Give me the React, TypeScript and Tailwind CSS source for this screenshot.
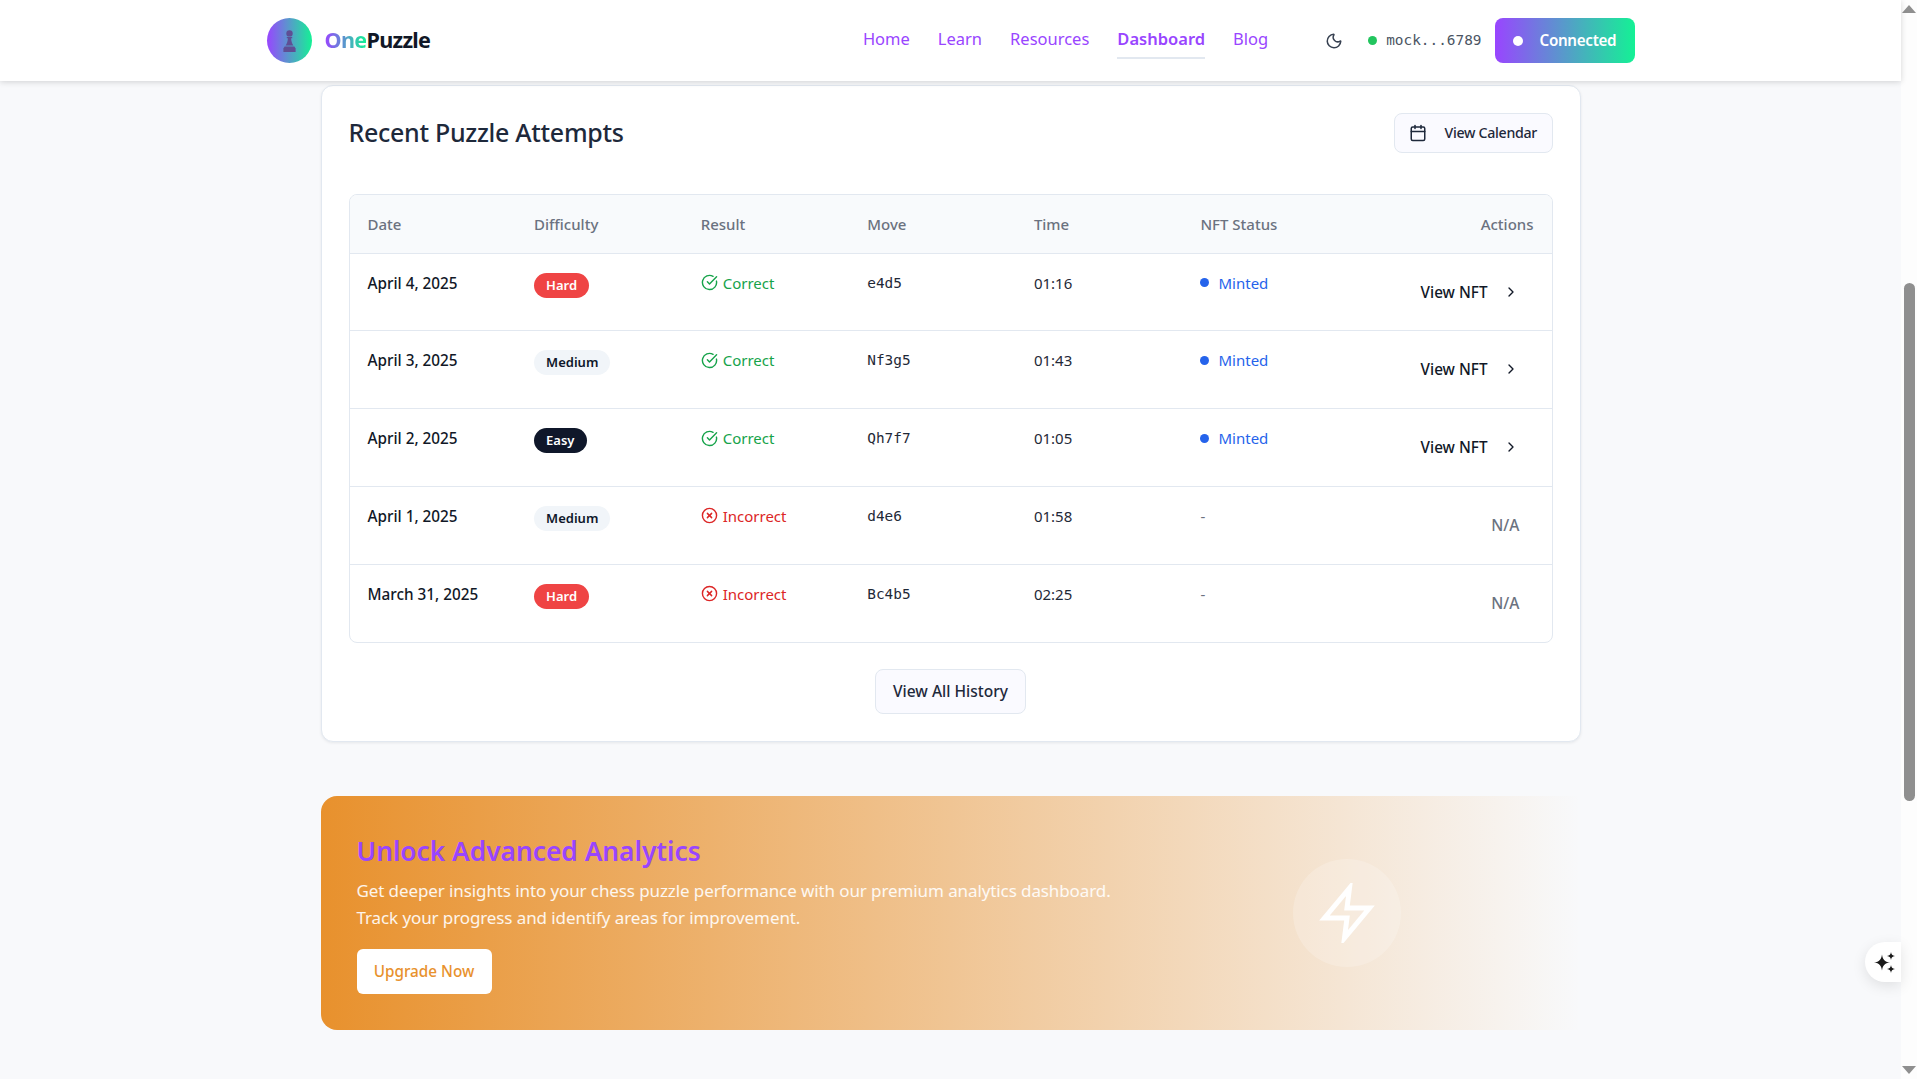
import { Calendar, ChevronRight, CircleCheckBig, CircleX, Moon } from "lucide-react";

type Attempt = {
  date: string;
  difficulty: "Hard" | "Medium" | "Easy";
  correct: boolean;
  move: string;
  time: string;
  minted: boolean;
};

const attempts: Attempt[] = [
  { date: "April 4, 2025", difficulty: "Hard", correct: true, move: "e4d5", time: "01:16", minted: true },
  { date: "April 3, 2025", difficulty: "Medium", correct: true, move: "Nf3g5", time: "01:43", minted: true },
  { date: "April 2, 2025", difficulty: "Easy", correct: true, move: "Qh7f7", time: "01:05", minted: true },
  { date: "April 1, 2025", difficulty: "Medium", correct: false, move: "d4e6", time: "01:58", minted: false },
  { date: "March 31, 2025", difficulty: "Hard", correct: false, move: "Bc4b5", time: "02:25", minted: false },
];

const badgeClass = {
  Hard: "bg-[#ef4444] text-white",
  Medium: "bg-[#f1f5f9] text-[#0f172a]",
  Easy: "bg-[#0f172a] text-white",
};

const navItems = ["Home", "Learn", "Resources", "Dashboard", "Blog"];
const headers = ["Date", "Difficulty", "Result", "Move", "Time", "NFT Status"];

const Pawn = () => (
  <svg width="13" height="22" viewBox="0 0 13 22" fill="#5f4e94">
    <circle cx="6.5" cy="3.4" r="3.2" />
    <path d="M3.8 7h5.4v1.2H8.1c.1 3 .9 5.2 2.3 7.4H2.6c1.4-2.2 2.2-4.4 2.3-7.4H3.8z" />
    <path d="M1.6 16.6h9.8l1.2 2V22H.4v-3.400z" />
  </svg>
);

const Sparkles = () => (
  <svg width="21" height="21" viewBox="0 0 21 21" fill="#1a1a1a">
    <path d="M8 2.500c.7 4.800 2.500 7.300 8 8-5.500.7-7.300 3.200-8 8-.7-4.800-2.500-7.300-8-8 5.500-.7 7.300-3.200 8-8z" />
    <path d="M17 0c.3 2.300 1.200 3.500 4 4-2.800.5-3.700 1.700-4 4-.3-2.300-1.200-3.500-4-4 2.800-.5 3.700-1.700 4-4z" />
    <path d="M17 13c.3 2.300 1.200 3.500 4 4-2.800.5-3.700 1.700-4 4-.3-2.300-1.200-3.500-4-4 2.800-.5 3.700-1.700 4-4z" />
  </svg>
);

const Header = () => (
  <header className="relative z-10 h-[81px] flex-none bg-white shadow-[0_1px_6px_rgba(0,0,0,0.16)]">
    <div className="mx-auto flex h-full w-[1368px] items-center justify-between">
      <div className="flex items-center gap-[13px]">
        <div className="flex h-[45px] w-[45px] items-center justify-center rounded-full bg-[linear-gradient(90deg,#9945ff,#14f195)]">
          <Pawn />
        </div>
        <div className="text-[21.6px] font-bold tracking-[-0.7px] text-[#111827]">
          <span className="bg-[linear-gradient(90deg,#9945ff,#14f195)] bg-clip-text text-transparent">One</span>
          Puzzle
        </div>
      </div>

      <div className="flex items-center">
        <nav className="mr-[57px] flex items-center gap-[28px] pb-[2px]">
          {navItems.map((item) => (
            <a
              key={item}
              className={
                item === "Dashboard"
                  ? "relative text-[16.5px] font-semibold text-[#9945ff]"
                  : "text-[16.5px] font-normal text-[#9945ff]"
              }
            >
              {item}
              {item === "Dashboard" && (
                <span className="absolute -bottom-[7px] left-0 h-[2px] w-full bg-[#e2e8f0]" />
              )}
            </a>
          ))}
        </nav>
        <Moon size={18} strokeWidth={2} className="mr-[25px] text-[#374151]" />
        <div className="mr-[13px] flex items-center gap-[9px]">
          <span className="h-[9px] w-[9px] rounded-full bg-[#22c55e]" />
          <span className="font-['DejaVu_Sans_Mono',monospace] text-[14.4px] text-[#4b5563]">mock...6789</span>
        </div>
        <button className="flex h-[45px] w-[140px] items-center gap-[17px] rounded-lg bg-[linear-gradient(90deg,#9945ff,#14f195)] pl-[18px] text-[15.2px] font-semibold tracking-[-0.3px] text-white">
          <span className="h-[10px] w-[10px] rounded-full bg-white" />
          Connected
        </button>
      </div>
    </div>
  </header>
);

const AttemptRow = ({ a, last }: { a: Attempt; last: boolean }) => (
  <tr className={last ? "h-[77.8px] align-top" : "h-[77.8px] border-b border-[#e2e8f0] align-top"}>
    <td className="px-[18px] pt-[17px] text-[15.3px] leading-6 font-medium text-[#111827]">{a.date}</td>
    <td className="px-[18px] pt-[18px]">
      <span className={`inline-block rounded-full px-3 text-[13px] leading-[25px] font-semibold ${badgeClass[a.difficulty]}`}>
        {a.difficulty}
      </span>
    </td>
    <td className="px-[18px] pt-[17px]">
      <div className={a.correct ? "flex items-center gap-[5px] text-[#16a34a]" : "flex items-center gap-[5px] text-[#dc2626]"}>
        {a.correct ? <CircleCheckBig size={17} /> : <CircleX size={17} />}
        <span className="text-[15px] leading-6">{a.correct ? "Correct" : "Incorrect"}</span>
      </div>
    </td>
    <td className="px-[18px] pt-[17px] font-['DejaVu_Sans_Mono',monospace] text-[14.4px] leading-6 text-[#1f2937]">{a.move}</td>
    <td className="px-[18px] pt-[17px] text-[15px] leading-6 text-[#1f2937]">{a.time}</td>
    <td className="px-[18px] pt-[17px]">
      {a.minted ? (
        <div className="flex items-center gap-[9px] text-[#2563eb]">
          <span className="h-[9px] w-[9px] rounded-full bg-[#2563eb]" />
          <span className="text-[15px] leading-6">Minted</span>
        </div>
      ) : (
        <span className="text-[15px] leading-6 text-[#6b7280]">-</span>
      )}
    </td>
    <td className="px-[18px] pt-[26px]">
      {a.minted ? (
        <div className="flex items-center justify-end gap-[15px] pr-[15px] text-[#111827]">
          <span className="text-[15.3px] leading-6 font-medium">View NFT</span>
          <ChevronRight size={16} />
        </div>
      ) : (
        <div className="pr-[14px] text-right text-[15.5px] leading-6 font-medium text-[#6b7280]">N/A</div>
      )}
    </td>
  </tr>
);

const AttemptsCard = () => (
  <section className="mt-1 rounded-xl border border-[#e2e8f0] bg-white px-[27px] pt-[27px] pb-[27px] shadow-[0_1px_3px_rgba(15,23,42,0.08)]">
    <div className="flex h-[40px] items-center justify-between">
      <h2 className="text-[25px] font-medium tracking-[-0.3px] text-[#1e293b]">Recent Puzzle Attempts</h2>
      <button className="flex h-[40px] w-[159px] items-center gap-[18px] rounded-lg border border-[#e2e8f0] bg-[#fafaff] pl-[14px] text-[14.2px] font-medium tracking-[-0.3px] text-[#1e293b]">
        <Calendar size={18} />
        View Calendar
      </button>
    </div>

    <div className="mt-[41px] overflow-hidden rounded-lg border border-[#e2e8f0]">
      <table className="w-full table-fixed border-collapse">
        <colgroup>
          <col className="w-[166.6px]" />
          <col className="w-[166.6px]" />
          <col className="w-[166.6px]" />
          <col className="w-[166.6px]" />
          <col className="w-[166.6px]" />
          <col className="w-[166.6px]" />
          <col />
        </colgroup>
        <thead>
          <tr className="h-[58px] border-b border-[#e2e8f0] bg-[#f8fafc]">
            {headers.map((h) => (
              <th key={h} className="px-[18px] text-left text-[15px] font-medium text-[#6b7280]">
                {h}
              </th>
            ))}
            <th className="px-[18px] text-right text-[15px] font-medium text-[#6b7280]">Actions</th>
          </tr>
        </thead>
        <tbody>
          {attempts.map((a, i) => (
            <AttemptRow key={a.date} a={a} last={i === attempts.length - 1} />
          ))}
        </tbody>
      </table>
    </div>

    <div className="mt-[26px] flex justify-center">
      <button className="h-[45px] w-[151px] rounded-lg border border-[#e2e8f0] bg-[#fafaff] text-[15.5px] font-medium text-[#1e293b]">
        View All History
      </button>
    </div>
  </section>
);

const UpgradeBanner = () => (
  <section className="mt-[54px] flex h-[234px] items-center justify-between rounded-l-2xl bg-[linear-gradient(90deg,#e8912d,transparent)] pr-[180px] pl-[36px]">
    <div>
      <h2 className="text-[26.3px] leading-[38px] font-semibold text-[#9945ff]">Unlock Advanced Analytics</h2>
      <p className="mt-[7px] max-w-[780px] text-[17px] leading-[27px] tracking-[-0.1px] text-white/90">
        Get deeper insights into your chess puzzle performance with our premium analytics dashboard. Track your progress and identify areas for improvement.
      </p>
      <button className="mt-[18px] h-[45px] w-[135px] rounded-md bg-white text-[15.3px] font-medium text-[#e8912d]">
        Upgrade Now
      </button>
    </div>
    <div className="flex h-[108px] w-[108px] items-center justify-center rounded-full bg-white/20">
      <svg width="60" height="60" viewBox="0 0 24 24" fill="none" stroke="white" strokeWidth="2">
        <polygon points="13 2 3 14 12 14 11 22 21 10 12 10 13 2" />
      </svg>
    </div>
  </section>
);

const Scrollbar = () => (
  <div className="flex h-full w-4 flex-none flex-col items-center bg-[#fdfdfd]">
    <div className="mt-[5px] h-0 w-0 border-x-[7px] border-b-[8px] border-x-transparent border-b-[#8f8f8f]" />
    <div className="mt-[270px] h-[518px] w-[11px] rounded-full bg-[#8f8f8f]" />
    <div className="mt-auto mb-[5px] h-0 w-0 border-x-[7px] border-t-[8px] border-x-transparent border-t-[#8f8f8f]" />
  </div>
);

const App = () => {
  return (
    <div className="flex h-screen w-full overflow-hidden bg-[#f8f9fb] font-['Noto_Sans',sans-serif]">
      <div className="relative flex min-w-0 flex-1 flex-col">
        <Header />
        <main className="mx-auto w-[1260px]">
          <AttemptsCard />
          <UpgradeBanner />
        </main>
        <button className="absolute top-[942px] right-0 flex h-[40px] w-[36px] items-center rounded-l-full bg-white pl-[9px] shadow-[0_4px_14px_rgba(0,0,0,0.1)]">
          <Sparkles />
        </button>
      </div>
      <Scrollbar />
    </div>
  );
};

export default App;
